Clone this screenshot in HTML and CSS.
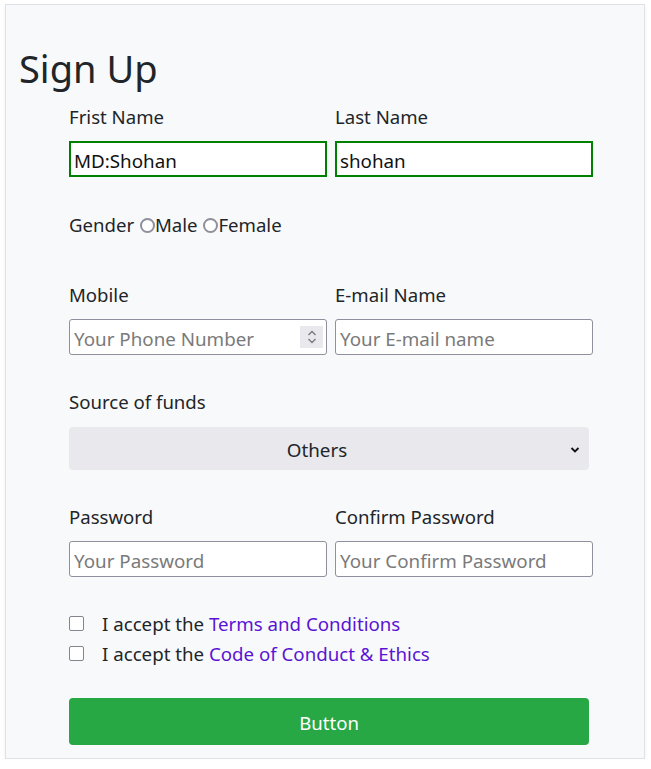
FILE: index.html
```html
<!DOCTYPE html>
<html lang="en">
<head>
<meta charset="utf-8">
<title>Sign Up</title>
<link rel="stylesheet" href="styles.css">
</head>
<body>
<div class="card">
  <h1 class="title">Sign Up</h1>
  <form class="form">
    <div class="row">
      <div class="field">
        <label class="label">Frist Name</label>
        <input class="input valid" type="text" value="MD:Shohan">
      </div>
      <div class="field">
        <label class="label">Last Name</label>
        <input class="input valid" type="text" value="shohan">
      </div>
    </div>

    <div class="gender">Gender <span class="radio"></span>Male <span class="radio"></span>Female</div>

    <div class="row sec sec-mobile">
      <div class="field">
        <label class="label">Mobile</label>
        <div class="input number">
          <input class="bare" type="text" placeholder="Your Phone Number">
          <span class="spin">
            <svg width="10" height="16" viewBox="0 0 10 16"><path d="M1.5 6 L5 2.5 L8.5 6" fill="none" stroke="#77777f" stroke-width="1.3"/><path d="M1.5 10 L5 13.5 L8.5 10" fill="none" stroke="#77777f" stroke-width="1.3"/></svg>
          </span>
        </div>
      </div>
      <div class="field">
        <label class="label">E-mail Name</label>
        <input class="input" type="text" placeholder="Your E-mail name">
      </div>
    </div>

    <div class="sec sec-funds">
      <label class="label label-funds">Source of funds</label>
      <div class="select">
        <span class="select-text">Others</span>
        <svg class="chev" width="10" height="8" viewBox="0 0 10 8"><path d="M1.5 2 L5 5.5 L8.5 2" fill="none" stroke="#111" stroke-width="1.8"/></svg>
      </div>
    </div>

    <div class="row sec sec-pass">
      <div class="field">
        <label class="label">Password</label>
        <input class="input" type="password" placeholder="Your Password">
      </div>
      <div class="field">
        <label class="label">Confirm Password</label>
        <input class="input" type="password" placeholder="Your Confirm Password">
      </div>
    </div>

    <div class="checks">
      <div class="check"><span class="box"></span>I accept the <a class="link" href="#">Terms and Conditions</a></div>
      <div class="check"><span class="box"></span>I accept the <a class="link" href="#">Code of Conduct &amp; Ethics</a></div>
    </div>

    <button class="btn" type="button">Button</button>
  </form>
</div>
</body>
</html>
```

FILE: styles.css
```css
html, body {
  margin: 0;
  padding: 0;
  background: #ffffff;
}
body {
  font-family: "Noto Sans", "Open Sans", sans-serif;
  color: #212529;
}
.card {
  box-sizing: border-box;
  width: 640px;
  height: 755px;
  margin: 4px 0 0 5px;
  border: 1px solid #dee2e6;
  background: #f8f9fa;
  box-shadow: 0 2px 4px rgba(0, 0, 0, 0.06);
  padding: 39px 0 0 13px;
}
.title {
  margin: 0;
  font-size: 38px;
  font-weight: 400;
  line-height: 48px;
  color: #212529;
}
.form {
  width: 524px;
  margin: 11px 0 0 50px;
}
.row {
  display: grid;
  grid-template-columns: 258px 258px;
  column-gap: 8px;
}
.label {
  display: block;
  font-size: 18.6px;
  line-height: 28px;
  margin-bottom: 10px;
}
.label-funds {
  margin-bottom: 11px;
}
.input {
  box-sizing: border-box;
  display: block;
  width: 258px;
  height: 36px;
  margin: 0;
  padding: 4px 4px 0;
  border: 1px solid #8f8f9d;
  border-radius: 3px;
  background: #fff;
  font-family: inherit;
  font-size: 18.8px;
  color: #111;
  outline: none;
}
.input::placeholder, .bare::placeholder {
  color: #7a7a7a;
}
.input.valid {
  border: 2px solid #008000;
  border-radius: 0;
  padding: 4px 3px 0;
  height: 36px;
}
.number {
  display: flex;
  align-items: center;
  padding: 0 3px 0 4px;
}
.bare {
  flex: 1;
  min-width: 0;
  border: 0;
  padding: 4px 0 0;
  margin: 0;
  background: transparent;
  font-family: inherit;
  font-size: 18.8px;
  outline: none;
}
.spin {
  width: 23px;
  height: 22px;
  background: #e9e9ed;
  display: flex;
  align-items: center;
  justify-content: center;
}
.gender {
  margin-top: 34px;
  font-size: 18.6px;
  line-height: 28px;
  display: flex;
  align-items: center;
  white-space: pre;
}
.radio {
  box-sizing: border-box;
  display: inline-block;
  width: 15px;
  height: 15px;
  border: 2px solid #8f8f9d;
  border-radius: 50%;
  background: #fff;
  margin-left: 1px;
}
.sec-mobile {
  margin-top: 42px;
}
.sec-funds {
  margin-top: 33px;
}
.sec-pass {
  margin-top: 33px;
}
.select {
  box-sizing: border-box;
  width: 520px;
  height: 43px;
  margin-top: 0;
  background: #e9e9ed;
  border-radius: 4px;
  display: flex;
  align-items: center;
  padding: 3px 9px 0 0;
  font-size: 18.8px;
}
.select-text {
  flex: 1;
  text-align: center;
  padding-right: 5px;
}
.chev {
  flex: none;
}
.checks {
  margin-top: 31px;
}
.check {
  display: flex;
  align-items: center;
  height: 30px;
  font-size: 18.7px;
  white-space: pre;
}
.box {
  box-sizing: border-box;
  width: 15px;
  height: 15px;
  border: 1.5px solid #858590;
  border-radius: 2px;
  background: #fff;
  margin-right: 18px;
}
.link {
  color: #5a13d4;
  text-decoration: none;
}
.btn {
  display: block;
  width: 520px;
  height: 47px;
  margin-top: 30px;
  padding-top: 3px;
  border: 0;
  border-radius: 4px;
  background: #28a745;
  color: #fff;
  font-family: inherit;
  font-size: 18.6px;
  cursor: pointer;
}
```
